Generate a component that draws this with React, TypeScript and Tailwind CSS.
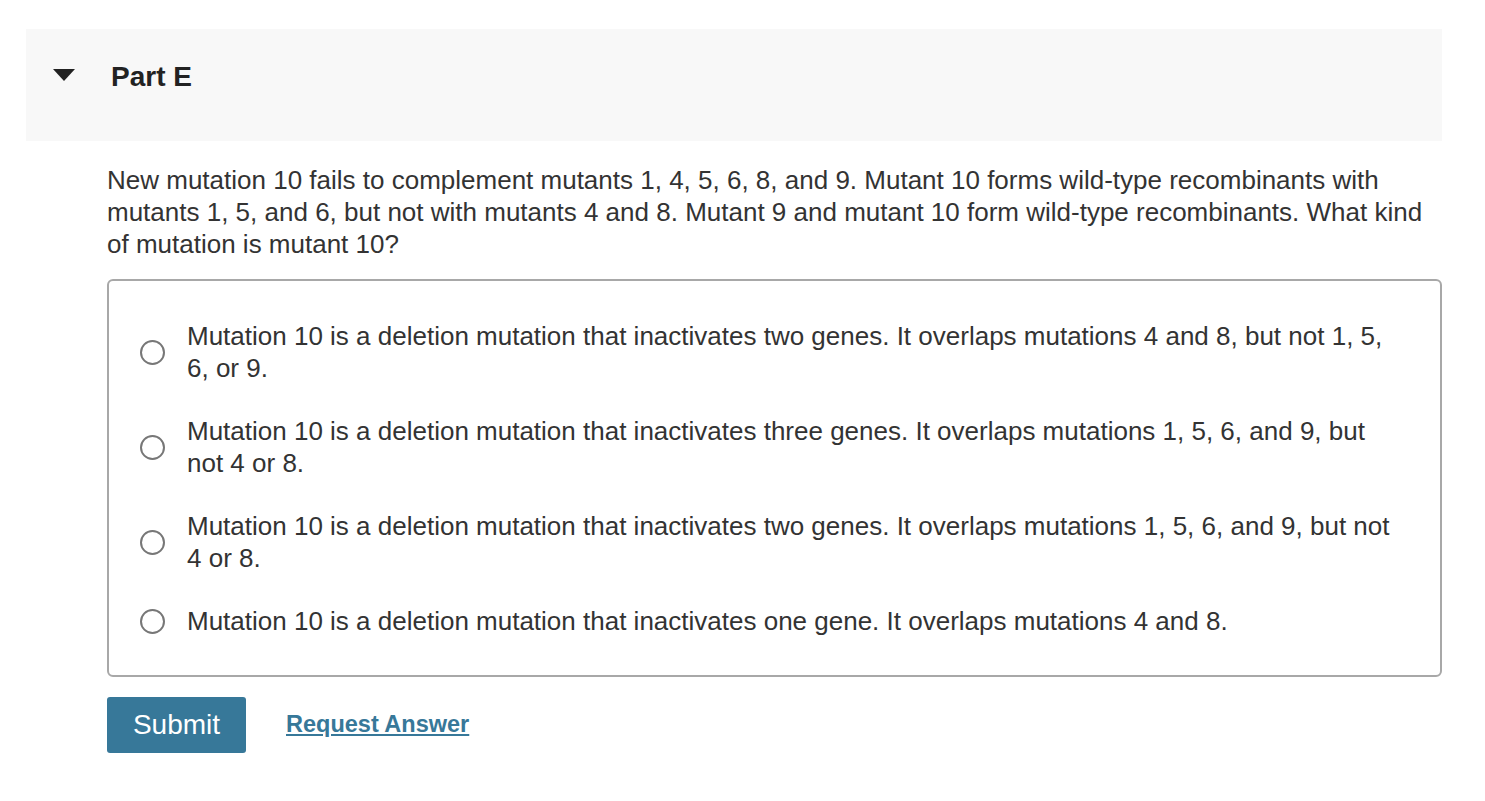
const options = [
  "Mutation 10 is a deletion mutation that inactivates two genes. It overlaps mutations 4 and 8, but not 1, 5, 6, or 9.",
  "Mutation 10 is a deletion mutation that inactivates three genes. It overlaps mutations 1, 5, 6, and 9, but not 4 or 8.",
  "Mutation 10 is a deletion mutation that inactivates two genes. It overlaps mutations 1, 5, 6, and 9, but not 4 or 8.",
  "Mutation 10 is a deletion mutation that inactivates one gene. It overlaps mutations 4 and 8.",
];

export default function App() {
  return (
    <div
      className="min-h-screen bg-white pl-[26px] pr-[43px] pt-[29px] text-[#333]"
      style={{ fontFamily: '"Liberation Sans", Arial, sans-serif' }}
    >
      {/* part header */}
      <div className="flex h-[112px] items-start bg-[#f8f8f8] pl-[27px] pt-[27px]">
        <svg width="22" height="12" viewBox="0 0 22 12" className="mt-[13px]">
          <path d="M0 0 L22 0 L11 12 Z" fill="#222" />
        </svg>
        <h2 className="ml-[36px] text-[28px] font-bold text-[#222]">Part E</h2>
      </div>

      <div className="pl-[81px]">
        <p className="mt-[23px] text-[26px] leading-[32px]">
          New mutation 10 fails to complement mutants 1, 4, 5, 6, 8, and 9. Mutant 10 forms wild-type
          recombinants with mutants 1, 5, and 6, but not with mutants 4 and 8. Mutant 9 and mutant 10
          form wild-type recombinants. What kind of mutation is mutant 10?
        </p>

        <div className="mt-[19px] flex flex-col gap-[31px] rounded-[6px] border-2 border-[#a8a8a8] pb-[38px] pl-[31px] pr-[40px] pt-[39px]">
          {options.map((text, i) => (
            <label key={i} className="flex cursor-pointer items-center">
              <span className="h-[25px] w-[25px] shrink-0 rounded-full border-2 border-[#777] bg-white" />
              <span className="ml-[22px] text-[26px] leading-[32px]">{text}</span>
            </label>
          ))}
        </div>

        <div className="mt-[20px] flex items-center">
          <button className="h-[56px] w-[139px] rounded-[3px] bg-[#377899] text-[28px] text-white">
            Submit
          </button>
          <a href="#" className="ml-[40px] text-[23.5px] font-bold text-[#377899] underline">
            Request Answer
          </a>
        </div>
      </div>
    </div>
  );
}
